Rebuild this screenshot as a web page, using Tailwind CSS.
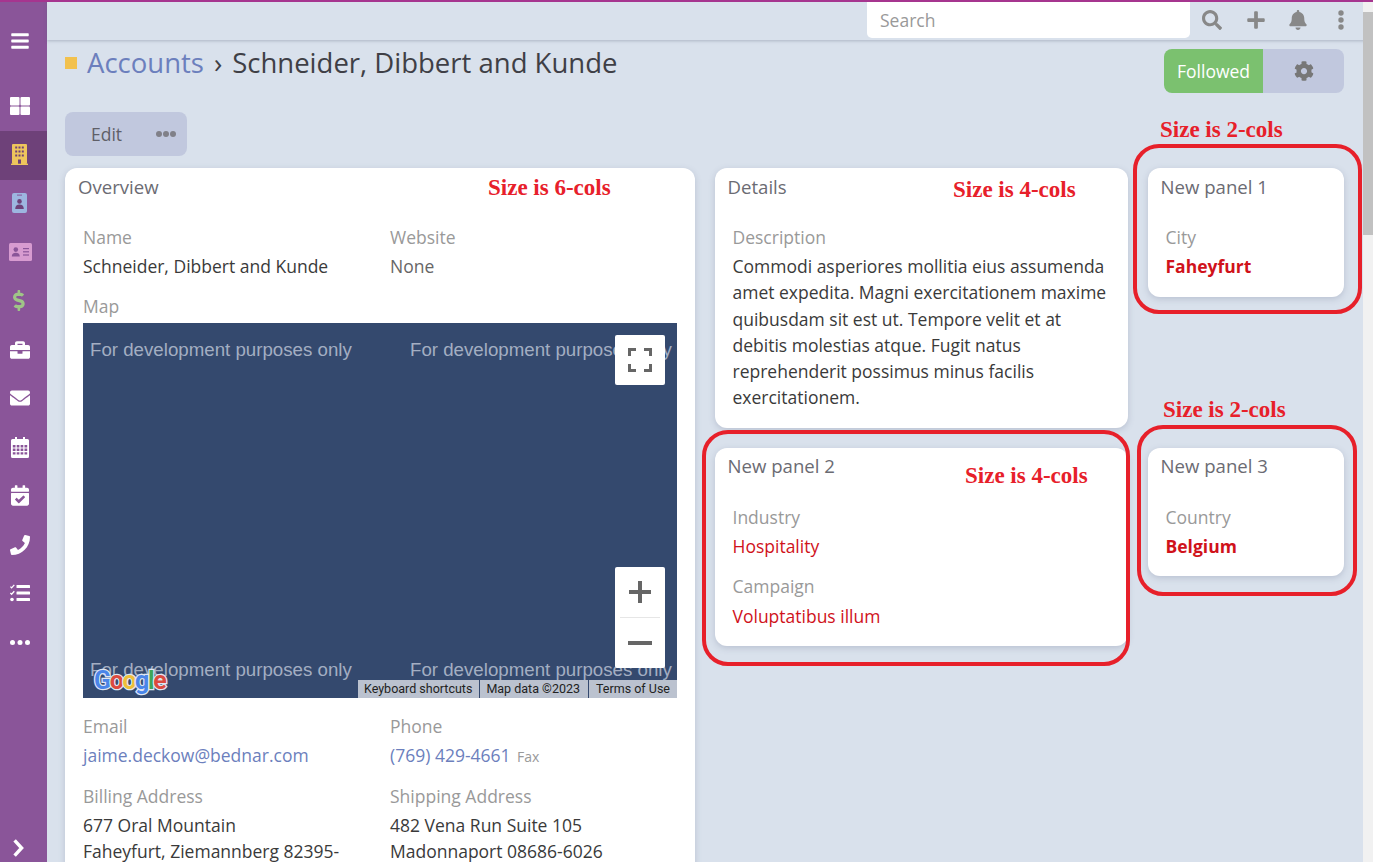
<!DOCTYPE html>
<html lang="en">
<head>
<meta charset="utf-8">
<title>Account</title>
<script src="https://cdn.jsdelivr.net/npm/@tailwindcss/browser@4"></script>
</head>
<body class="m-0 bg-[#d9e1ec]">
<div class="relative flex h-[862px] w-[1373px] overflow-hidden bg-[#d9e1ec] font-['Open_Sans',sans-serif] text-[17.5px] leading-[26.2px] text-[#3a3a3a]">

  <!-- Sidebar -->
  <nav class="flex h-full w-[47px] shrink-0 flex-col items-center bg-[#8a5599] pt-[2px] text-white">
    <div class="flex h-[80px] w-full items-center justify-center pb-[2px] pr-[8px]">
      <svg class="h-[20px] w-[18px]" viewBox="0 0 448 512" fill="#fff"><path d="M16 132h416c8.837 0 16-7.163 16-16V76c0-8.837-7.163-16-16-16H16C7.163 60 0 67.163 0 76v40c0 8.837 7.163 16 16 16zm0 160h416c8.837 0 16-7.163 16-16v-40c0-8.837-7.163-16-16-16H16c-8.837 0-16 7.163-16 16v40c0 8.837 7.163 16 16 16zm0 160h416c8.837 0 16-7.163 16-16v-40c0-8.837-7.163-16-16-16H16c-8.837 0-16 7.163-16 16v40c0 8.837 7.163 16 16 16z"/></svg>
    </div>
    <div class="flex h-[48.75px] w-full items-center justify-center pr-[8px]">
      <svg class="h-[18px] w-[20px]" viewBox="0 0 20 18" fill="#fff"><rect x="0" y="0" width="9.5" height="8.5" rx="1"/><rect x="10.5" y="0" width="9.5" height="8.5" rx="1"/><rect x="0" y="9.5" width="9.5" height="8.5" rx="1"/><rect x="10.5" y="9.5" width="9.5" height="8.5" rx="1"/></svg>
    </div>
    <div class="flex h-[48.75px] w-full items-center justify-center bg-[#6e4179] pb-[1px] pr-[8px]">
      <svg class="h-[21px] w-[17px]" viewBox="0 0 17 21"><rect x="1" y="0" width="15" height="20" rx="1" fill="#eec55c"/><rect x="0" y="19.6" width="17" height="1.4" fill="#eec55c"/><g fill="#6e4179"><rect x="4.2" y="2.5" width="2" height="2"/><rect x="7.5" y="2.5" width="2" height="2"/><rect x="10.8" y="2.5" width="2" height="2"/><rect x="4.2" y="6.5" width="2" height="2"/><rect x="7.5" y="6.5" width="2" height="2"/><rect x="10.8" y="6.5" width="2" height="2"/><rect x="4.2" y="10.5" width="2" height="2"/><rect x="7.5" y="10.5" width="2" height="2"/><rect x="10.8" y="10.5" width="2" height="2"/><rect x="7" y="15.5" width="3" height="4.2"/></g></svg>
    </div>
    <div class="flex h-[48.75px] w-full items-center justify-center pb-[1px] pr-[8px]">
      <svg class="h-[20px] w-[15px]" viewBox="0 0 15 20"><rect width="15" height="20" rx="2" fill="#9db6e0"/><rect x="5" y="1.6" width="5" height="1" fill="#8a5599"/><circle cx="7.5" cy="8.4" r="2.3" fill="#6e4179"/><path d="M3.2 16c0-3 1.8-4.4 4.3-4.4s4.3 1.400 4.300 4.400z" fill="#6e4179"/></svg>
    </div>
    <div class="flex h-[48.75px] w-full items-center justify-center pb-[1px] pr-[6px]">
      <svg class="h-[18px] w-[23px]" viewBox="0 0 23 18"><rect width="23" height="18" rx="1.5" fill="#d79bd0"/><circle cx="6.8" cy="6.6" r="2.3" fill="#8a5599"/><path d="M2.800 13.400c0-2.400 1.700-3.600 4-3.600s4 1.200 4 3.600z" fill="#8a5599"/><g fill="#8a5599"><rect x="14" y="5" width="6" height="1.2"/><rect x="14" y="8.2" width="6" height="1.2"/><rect x="14" y="11.4" width="6" height="1.2"/></g></svg>
    </div>
    <div class="flex h-[48.75px] w-full items-center justify-center pb-[1px] pr-[8px]">
      <svg class="h-[21px] w-[13px]" viewBox="0 0 320 512" fill="#9fc587"><path d="M209.2 233.4l-108-31.6C88.7 198.2 80 186.5 80 173.5c0-16.3 13.2-29.5 29.5-29.5h66.3c12.2 0 24.2 3.7 34.2 10.5 6.1 4.1 14.3 3.1 19.5-2l34.8-34c7.1-6.9 6.1-18.4-1.8-24.5C238 74.8 207.4 64.1 176 64V16c0-8.8-7.2-16-16-16h-32c-8.8 0-16 7.2-16 16v48h-2.5C45.8 64-5.4 118.7.5 183.6c4.2 46.1 39.4 83.6 83.8 96.6l102.5 30c12.5 3.7 21.2 15.3 21.2 28.3 0 16.3-13.2 29.5-29.5 29.5h-66.3C100 368 88 364.3 78 357.5c-6.1-4.1-14.3-3.1-19.5 2l-34.8 34c-7.1 6.9-6.1 18.4 1.8 24.5 24.5 19.2 55.1 29.9 86.5 30v48c0 8.8 7.2 16 16 16h32c8.8 0 16-7.2 16-16v-48.2c46.6-.9 90.3-28.6 105.7-72.7 21.5-61.6-14.6-124.8-72.5-141.700z"/></svg>
    </div>
    <div class="flex h-[48.75px] w-full items-center justify-center pb-[1px] pr-[8px]">
      <svg class="h-[20px] w-[20px]" viewBox="0 0 512 512" fill="#fff"><path d="M320 336c0 8.84-7.16 16-16 16h-96c-8.84 0-16-7.16-16-16v-48H0v144c0 25.6 22.4 48 48 48h416c25.6 0 48-22.4 48-48V288H320v48zm144-208h-80V80c0-25.6-22.4-48-48-48H176c-25.6 0-48 22.4-48 48v48H48c-25.6 0-48 22.4-48 48v80h512v-80c0-25.6-22.4-48-48-48zm-144 0H192V96h128v32z"/></svg>
    </div>
    <div class="flex h-[48.75px] w-full items-center justify-center pb-[1px] pr-[8px]">
      <svg class="h-[20px] w-[20px]" viewBox="0 0 512 512" fill="#fff"><path d="M502.3 190.8c3.9-3.1 9.7-.2 9.7 4.7V400c0 26.5-21.5 48-48 48H48c-26.5 0-48-21.5-48-48V195.6c0-5 5.7-7.8 9.7-4.7 22.4 17.4 52.1 39.5 154.1 113.6 21.1 15.4 56.7 47.8 92.2 47.6 35.7.3 72-32.8 92.3-47.6 102-74.1 131.6-96.3 154-113.7zM256 320c23.2.4 56.6-29.2 73.4-41.4 132.7-96.3 142.8-104.7 173.4-128.7 5.8-4.5 9.2-11.5 9.2-18.9v-19c0-26.5-21.5-48-48-48H48C21.5 64 0 85.5 0 112v19c0 7.4 3.4 14.3 9.2 18.9 30.6 23.9 40.7 32.4 173.4 128.7 16.8 12.2 50.2 41.8 73.4 41.4z"/></svg>
    </div>
    <div class="flex h-[48.75px] w-full items-center justify-center pb-[1px] pr-[8px]">
      <svg class="h-[21px] w-[18px]" viewBox="0 0 18 21" fill="#fff"><path fill-rule="evenodd" d="M4 0h2v2h6V0h2v2h2.500A1.500 1.500 0 0 1 18 3.500v16a1.500 1.500 0 0 1-1.500 1.500h-15A1.500 1.500 0 0 1 0 19.500v-16A1.500 1.500 0 0 1 1.500 2H4zM1.800 8v2.400h2.700V8zm3.900 0v2.400h2.700V8zm3.900 0v2.400h2.700V8zm3.900 0v2.400h2.700V8zM1.800 11.600V14h2.700v-2.400zm3.900 0V14h2.700v-2.400zm3.900 0V14h2.700v-2.400zm3.900 0V14h2.700v-2.400zM1.800 15.200v2.400h2.700v-2.400zm3.900 0v2.400h2.700v-2.400zm3.900 0v2.400h2.700v-2.400zm3.900 0v2.400h2.700v-2.400z"/></svg>
    </div>
    <div class="flex h-[48.75px] w-full items-center justify-center pb-[1px] pr-[8px]">
      <svg class="h-[21px] w-[18px]" viewBox="0 0 448 512" fill="#fff"><path d="M436 160H12c-6.600 0-12-5.400-12-12v-36c0-26.500 21.500-48 48-48h48V12c0-6.600 5.400-12 12-12h40c6.600 0 12 5.400 12 12v52h128V12c0-6.600 5.400-12 12-12h40c6.600 0 12 5.400 12 12v52h48c26.500 0 48 21.500 48 48v36c0 6.600-5.400 12-12 12zM12 192h424c6.600 0 12 5.400 12 12v260c0 26.500-21.500 48-48 48H48c-26.500 0-48-21.500-48-48V204c0-6.600 5.400-12 12-12zm333.300 95.900l-28.200-28.400c-4.700-4.700-12.300-4.700-17-.1L194.100 364.700l-45.800-46.200c-4.700-4.700-12.300-4.700-17-.1l-28.400 28.200c-4.700 4.700-4.700 12.300-.1 17l82.600 83.200c4.700 4.700 12.300 4.700 17 .1l142.900-141.900c4.700-4.700 4.700-12.300 0-17z"/></svg>
    </div>
    <div class="flex h-[48.75px] w-full items-center justify-center pb-[1px] pr-[8px]">
      <svg class="h-[20px] w-[20px]" viewBox="0 0 512 512" fill="#fff"><path d="M493.400 24.600l-104-24c-11.300-2.600-22.900 3.300-27.500 13.900l-48 112c-4.200 9.800-1.400 21.300 6.900 28l60.600 49.600c-36 76.700-98.900 140.500-177.200 177.200l-49.600-60.600c-6.800-8.300-18.200-11.100-28-6.900l-112 48C3.900 366.500-2 378.100.6 389.400l24 104C27.100 504.200 36.700 512 48 512c256.100 0 464-207.500 464-464 0-11.200-7.700-20.900-18.600-23.400z"/></svg>
    </div>
    <div class="flex h-[48.75px] w-full items-center justify-center pb-[1px] pr-[8px]">
      <svg class="h-[18px] w-[20px]" viewBox="0 0 20 18" fill="#fff"><rect x="6.500" y="1" width="13.500" height="3" rx=".6"/><rect x="6.500" y="7.500" width="13.500" height="3" rx=".6"/><rect x="6.500" y="14" width="13.500" height="3" rx=".6"/><path d="M.4 2.600l1.200 1.300L4.300.9" fill="none" stroke="#fff" stroke-width="1.300"/><path d="M.4 9l1.200 1.300 2.700-3" fill="none" stroke="#fff" stroke-width="1.300"/><circle cx="2" cy="15.500" r="1.800"/></svg>
    </div>
    <div class="flex h-[48.75px] w-full items-center justify-center pb-[1px] pr-[8px]">
      <svg class="h-[5px] w-[20px]" viewBox="0 0 20 5" fill="#fff"><circle cx="2.500" cy="2.500" r="2.500"/><circle cx="10" cy="2.500" r="2.500"/><circle cx="17.500" cy="2.500" r="2.500"/></svg>
    </div>
    <div class="mt-auto flex h-[50px] w-full items-center justify-center pr-[10px] pt-[22px]">
      <svg class="h-[18px] w-[11px]" viewBox="0 0 11 18" fill="none" stroke="#fff" stroke-width="3.400"><path d="M1.600 1.400 8.600 9l-7 7.600"/></svg>
    </div>
  </nav>

  <!-- Main column -->
  <div class="flex min-w-0 flex-1 flex-col">
    <!-- Top bar -->
    <header class="flex h-[40px] shrink-0 items-center justify-end bg-[#d9e1ec] pr-[10px] shadow-[0_1px_3px_rgba(90,100,120,0.35)]">
      <div class="flex h-[36px] w-[323px] items-center rounded-b-[5px] bg-white pl-[13px] text-[#999]">Search</div>
      <div class="flex w-[173px] items-center pl-[12px]">
        <svg class="h-[20px] w-[20px]" viewBox="0 0 512 512" fill="#888"><path d="M505 442.700L405.300 343c-4.500-4.500-10.600-7-17-7H372c27.600-35.300 44-79.700 44-128C416 93.100 322.900 0 208 0S0 93.100 0 208s93.100 208 208 208c48.300 0 92.700-16.400 128-44v16.300c0 6.400 2.500 12.500 7 17l99.700 99.700c9.400 9.400 24.600 9.400 33.900 0l28.300-28.300c9.400-9.400 9.400-24.600.1-34zM208 336c-70.700 0-128-57.200-128-128 0-70.700 57.200-128 128-128 70.700 0 128 57.200 128 128 0 70.700-57.200 128-128 128z"/></svg>
        <svg class="ml-[25px] h-[20px] w-[18px]" viewBox="0 0 448 512" fill="#888"><path d="M416 208H272V64c0-17.670-14.330-32-32-32h-32c-17.670 0-32 14.330-32 32v144H32c-17.670 0-32 14.330-32 32v32c0 17.670 14.330 32 32 32h144v144c0 17.670 14.330 32 32 32h32c17.670 0 32-14.330 32-32V304h144c17.670 0 32-14.330 32-32v-32c0-17.670-14.330-32-32-32z"/></svg>
        <svg class="ml-[24px] h-[20px] w-[18px]" viewBox="0 0 448 512" fill="#888"><path d="M224 512c35.320 0 63.970-28.650 63.970-64H160.030c0 35.350 28.650 64 63.970 64zm215.390-149.710c-19.320-20.760-55.470-51.990-55.470-154.290 0-77.700-54.480-139.900-127.940-155.160V32c0-17.670-14.320-32-31.980-32s-31.980 14.330-31.980 32v20.840C118.560 68.100 64.080 130.300 64.080 208c0 102.300-36.150 133.530-55.470 154.290-6 6.450-8.660 14.160-8.610 21.710.11 16.400 12.980 32 32.100 32h383.800c19.120 0 32-15.600 32.100-32 .05-7.550-2.610-15.270-8.610-21.710z"/></svg>
        <svg class="ml-[31px] h-[20px] w-[6px]" viewBox="0 0 6 20" fill="#888"><circle cx="3" cy="3" r="2.700"/><circle cx="3" cy="10" r="2.700"/><circle cx="3" cy="17" r="2.700"/></svg>
      </div>
    </header>

    <!-- Page -->
    <main class="min-h-0 flex-1 pl-[18px] pr-[29px]">
      <div class="flex h-[72px] items-start justify-between">
        <div class="flex items-center pt-[3px]">
          <span class="mr-[10px] h-[12px] w-[12px] bg-[#f2c14e]"></span>
          <h1 class="text-[27.5px] leading-[40px] font-normal text-[#3f3f46]"><span class="text-[#6c7fbd]">Accounts</span><span class="mx-[10px]">›</span>Schneider, Dibbert and Kunde</h1>
        </div>
        <div class="mt-[9px] flex h-[44px] overflow-hidden rounded-[8px]">
          <div class="flex w-[99px] items-center justify-center bg-[#7bc16f] text-white">Followed</div>
          <div class="flex w-[81px] items-center justify-center bg-[#c1c8de]">
            <svg class="h-[20px] w-[20px]" viewBox="0 0 512 512" fill="#777"><path d="M487.400 315.700l-42.600-24.600c4.300-23.200 4.300-47 0-70.200l42.600-24.600c4.900-2.800 7.100-8.600 5.500-14-11.100-35.600-30-67.800-54.700-94.600-3.800-4.100-10-5.100-14.800-2.300L380.800 110c-17.900-15.400-38.500-27.300-60.800-35.100V25.800c0-5.600-3.900-10.500-9.400-11.700-36.700-8.200-74.300-7.800-109.200 0-5.500 1.200-9.400 6.100-9.400 11.700V75c-22.200 7.900-42.800 19.800-60.800 35.100L88.700 85.500c-4.900-2.800-11-1.900-14.800 2.300-24.700 26.700-43.600 58.900-54.700 94.600-1.700 5.400.6 11.200 5.500 14L67.300 221c-4.300 23.200-4.300 47 0 70.200l-42.600 24.600c-4.900 2.800-7.100 8.600-5.500 14 11.100 35.600 30 67.800 54.700 94.600 3.800 4.100 10 5.100 14.800 2.300l42.600-24.600c17.900 15.400 38.500 27.300 60.800 35.100v49.200c0 5.600 3.900 10.500 9.400 11.700 36.700 8.200 74.300 7.800 109.200 0 5.500-1.200 9.400-6.100 9.400-11.700v-49.200c22.200-7.900 42.800-19.800 60.800-35.100l42.600 24.600c4.900 2.800 11 1.900 14.800-2.300 24.700-26.700 43.600-58.900 54.700-94.600 1.500-5.500-.7-11.300-5.600-14.100zM256 336c-44.100 0-80-35.900-80-80s35.900-80 80-80 80 35.900 80 80-35.900 80-80 80z"/></svg>
          </div>
        </div>
      </div>

      <div class="flex h-[44px] w-[122px] items-center rounded-[8px] bg-[#c1c8de] pl-[26px] text-[#5f5f68]">
        <span>Edit</span>
        <svg class="ml-[34px] h-[6px] w-[20px]" viewBox="0 0 20 6" fill="#808088"><circle cx="3" cy="3" r="3"/><circle cx="10" cy="3" r="3"/><circle cx="17" cy="3" r="3"/></svg>
      </div>

      <div class="mt-[12px] flex items-start gap-[20px]">
        <!-- Overview -->
        <section class="w-[630px] shrink-0 rounded-[12px] bg-white px-[18px] pb-[20px] shadow-[0_2px_6px_rgba(90,100,130,0.25)]">
          <h2 class="-ml-[5px] h-[56px] pt-[6px] text-[18.6px] font-normal text-[#6b6b73]">Overview</h2>
          <div class="grid grid-cols-[307px_1fr]">
            <div><div class="mb-[3px] text-[#999]">Name</div><div>Schneider, Dibbert and Kunde</div></div>
            <div><div class="mb-[3px] text-[#999]">Website</div><div class="text-[#666]">None</div></div>
          </div>
          <div class="mt-[14px] h-[30px] text-[#999]">Map</div>
          <!-- Map -->
          <div class="relative h-[375px] overflow-hidden bg-[#34496e] font-['Liberation_Sans',sans-serif] text-[18.7px] text-[#a3aec2]">
            <span class="absolute left-[7px] top-[14px] whitespace-nowrap">For development purposes only</span>
            <span class="absolute left-[327px] top-[14px] whitespace-nowrap">For development purposes only</span>
            <span class="absolute left-[7px] top-[334px] whitespace-nowrap">For development purposes only</span>
            <span class="absolute left-[327px] top-[334px] whitespace-nowrap">For development purposes only</span>
            <div class="absolute left-[532px] top-[12px] flex h-[50px] w-[50px] items-center justify-center rounded-[2px] bg-white">
              <svg class="h-[24px] w-[24px]" viewBox="0 0 24 24" fill="none" stroke="#666" stroke-width="3"><path d="M1.500 8V1.500H8M16 1.500h6.500V8M22.500 16v6.500H16M8 22.500H1.500V16"/></svg>
            </div>
            <div class="absolute left-[532px] top-[244px] flex h-[101px] w-[50px] flex-col items-center rounded-[2px] bg-white">
              <div class="flex h-[50px] w-full items-center justify-center">
                <svg class="h-[24px] w-[24px]" viewBox="0 0 24 24" fill="#666"><path d="M10 1h4v9h9v4h-9v9h-4v-9H1v-4h9z"/></svg>
              </div>
              <div class="h-px w-[40px] bg-[#e6e6e6]"></div>
              <div class="flex h-[50px] w-full items-center justify-center">
                <svg class="h-[4px] w-[24px]" viewBox="0 0 24 4" fill="#666"><rect width="24" height="4"/></svg>
              </div>
            </div>
            <div class="absolute left-[11px] top-[343px] flex font-['Roboto',sans-serif] text-[25px] leading-[30px] font-bold tracking-[-1.400px] [-webkit-text-stroke:2.5px_#dfe6f2] [paint-order:stroke_fill]">
              <span class="text-[#4a85e8]">G</span><span class="text-[#dc4a3e]">o</span><span class="text-[#eebf3a]">o</span><span class="text-[#4a85e8]">g</span><span class="text-[#3fa757]">l</span><span class="text-[#dc4a3e]">e</span>
            </div>
            <div class="absolute bottom-0 right-0 flex h-[18px] items-center bg-[#bbc2cf] font-['Roboto',sans-serif] text-[12.500px] leading-[18px] text-[#222]">
              <span class="border-r border-[#34496e] pl-[6px] pr-[7px]">Keyboard shortcuts</span>
              <span class="border-r border-[#34496e] pl-[6px] pr-[8px]">Map data ©2023</span>
              <span class="px-[7px]">Terms of Use</span>
            </div>
          </div>
          <div class="mt-[15px] grid grid-cols-[307px_1fr] gap-y-[13px]">
            <div><div class="mb-[2px] text-[#999]">Email</div><div class="text-[#6c7fbd]">jaime.deckow@bednar.com</div></div>
            <div><div class="mb-[2px] text-[#999]">Phone</div><div><span class="text-[#6c7fbd]">(769) 429-4661</span> <span class="ml-[2px] text-[14px] text-[#999]">Fax</span></div></div>
            <div><div class="mb-[3px] text-[#999]">Billing Address</div><div>677 Oral Mountain<br>Faheyfurt, Ziemannberg 82395-</div></div>
            <div><div class="mb-[3px] text-[#999]">Shipping Address</div><div>482 Vena Run Suite 105<br>Madonnaport 08686-6026</div></div>
          </div>
        </section>

        <!-- Right area -->
        <div class="grid grid-cols-[413px_196px] items-start gap-[20px]">
          <section class="h-[260px] rounded-[12px] bg-white px-[17.5px] shadow-[0_2px_6px_rgba(90,100,130,0.25)]">
            <h2 class="-ml-[5px] h-[56px] pt-[6px] text-[18.6px] font-normal text-[#6b6b73]">Details</h2>
            <div class="mb-[3px] text-[#999]">Description</div>
            <div>Commodi asperiores mollitia eius assumenda amet expedita. Magni exercitationem maxime quibusdam sit est ut. Tempore velit et at debitis molestias atque. Fugit natus reprehenderit possimus minus facilis exercitationem.</div>
          </section>
          <section class="h-[129px] rounded-[12px] bg-white px-[17.5px] shadow-[0_2px_6px_rgba(90,100,130,0.25)]">
            <h2 class="-ml-[5px] h-[56px] pt-[6px] text-[18.6px] font-normal text-[#6b6b73]">New panel 1</h2>
            <div class="mb-[3px] text-[#999]">City</div>
            <div class="font-bold text-[#d0121b]">Faheyfurt</div>
          </section>
          <section class="h-[198px] rounded-[12px] bg-white px-[17.5px] shadow-[0_2px_6px_rgba(90,100,130,0.25)]">
            <h2 class="-ml-[5px] h-[56px] pt-[5px] text-[18.6px] font-normal text-[#6b6b73]">New panel 2</h2>
            <div class="mb-[3px] text-[#999]">Industry</div>
            <div class="text-[#d0121b]">Hospitality</div>
            <div class="mb-[3px] mt-[14px] text-[#999]">Campaign</div>
            <div class="text-[#d0121b]">Voluptatibus illum</div>
          </section>
          <section class="h-[128px] rounded-[12px] bg-white px-[17.5px] shadow-[0_2px_6px_rgba(90,100,130,0.25)]">
            <h2 class="-ml-[5px] h-[56px] pt-[5px] text-[18.6px] font-normal text-[#6b6b73]">New panel 3</h2>
            <div class="mb-[3px] text-[#999]">Country</div>
            <div class="font-bold text-[#d0121b]">Belgium</div>
          </section>
        </div>
      </div>
    </main>
  </div>

  <!-- Scrollbar -->
  <div class="absolute right-0 top-[2px] h-[860px] w-[10px] bg-[#f1f1f1] pt-[10px]">
    <div class="h-[223px] w-full bg-[#c1c1c1]"></div>
  </div>
  <!-- Top accent line -->
  <div class="absolute left-0 top-0 h-[2px] w-full bg-[#a6358f]"></div>

  <!-- Red annotations drawn over the screenshot -->
  <div class="absolute left-[1133px] top-[144px] h-[170px] w-[229px] rounded-[26px] border-[4px] border-[#e7202a]"></div>
  <div class="absolute left-[702px] top-[430px] h-[236px] w-[428px] rounded-[26px] border-[4px] border-[#e7202a]"></div>
  <div class="absolute left-[1137px] top-[425px] h-[171px] w-[220px] rounded-[26px] border-[4px] border-[#e7202a]"></div>
  <span class="absolute left-[488px] top-[175px] whitespace-nowrap font-['Liberation_Serif',serif] text-[23px] leading-[26px] font-bold text-[#e7202a]">Size is 6-cols</span>
  <span class="absolute left-[953px] top-[177px] whitespace-nowrap font-['Liberation_Serif',serif] text-[23px] leading-[26px] font-bold text-[#e7202a]">Size is 4-cols</span>
  <span class="absolute left-[1160px] top-[117px] whitespace-nowrap font-['Liberation_Serif',serif] text-[23px] leading-[26px] font-bold text-[#e7202a]">Size is 2-cols</span>
  <span class="absolute left-[1163px] top-[397px] whitespace-nowrap font-['Liberation_Serif',serif] text-[23px] leading-[26px] font-bold text-[#e7202a]">Size is 2-cols</span>
  <span class="absolute left-[965px] top-[463px] whitespace-nowrap font-['Liberation_Serif',serif] text-[23px] leading-[26px] font-bold text-[#e7202a]">Size is 4-cols</span>
</div>
</body>
</html>
